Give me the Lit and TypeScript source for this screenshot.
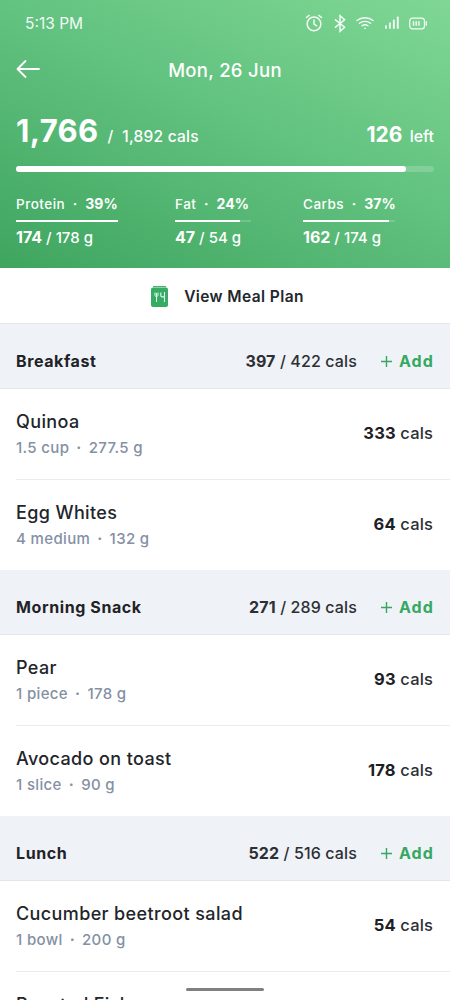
import { LitElement, html, css, svg } from "lit";
import { customElement } from "lit/decorators.js";

interface Item { name: string; qty: string; g: string; cals: number; }
interface Meal { title: string; eaten: number; goal: number; items: Item[]; }

const meals: Meal[] = [
  { title: "Breakfast", eaten: 397, goal: 422, items: [
    { name: "Quinoa", qty: "1.5 cup", g: "277.5 g", cals: 333 },
    { name: "Egg Whites", qty: "4 medium", g: "132 g", cals: 64 },
  ]},
  { title: "Morning Snack", eaten: 271, goal: 289, items: [
    { name: "Pear", qty: "1 piece", g: "178 g", cals: 93 },
    { name: "Avocado on toast", qty: "1 slice", g: "90 g", cals: 178 },
  ]},
  { title: "Lunch", eaten: 522, goal: 516, items: [
    { name: "Cucumber beetroot salad", qty: "1 bowl", g: "200 g", cals: 54 },
    { name: "Roasted Fish", qty: "1 piece", g: "150 g", cals: 210 },
  ]},
];

const macros = [
  { label: "Protein", pct: "39%", val: 174, goal: "178 g", width: 102, fill: 102 },
  { label: "Fat", pct: "24%", val: 47, goal: "54 g", width: 76, fill: 65 },
  { label: "Carbs", pct: "37%", val: 162, goal: "174 g", width: 92, fill: 86 },
];

@customElement("app-root")
export class AppRoot extends LitElement {
  static styles = css`
    :host { display: block; position: relative; width: 450px; height: 1000px; overflow: hidden; background: #fff; font-family: Inter, "Open Sans", sans-serif; color: #1c2024; }
    .hero { height: 268px; box-sizing: border-box; background: linear-gradient(205deg, #80d795 0%, #62c27f 45%, #3ea55f 100%); color: #fff; padding: 0 16px; display: flex; flex-direction: column; }
    .status { height: 46px; display: flex; align-items: center; justify-content: space-between; padding: 0 7px 0 9px; font-size: 15.5px; opacity: .92; }
    .icons { display: flex; align-items: center; gap: 10.5px; }
    .nav { height: 48px; display: flex; align-items: center; position: relative; justify-content: center; font-size: 18.5px; font-weight: 500; letter-spacing: .3px; }
    .back { position: absolute; left: 0; top: 13px; }
    .totals { display: flex; align-items: baseline; justify-content: space-between; margin-top: 18px; height: 37px; }
    .big { font-size: 31px; font-weight: 700; letter-spacing: .35px; }
    .sub { font-size: 15.5px; font-weight: 500; margin-left: 9px; letter-spacing: .25px; }
    .left { font-size: 16px; font-weight: 500; }
    .left b { font-size: 21px; font-weight: 700; margin-right: 3px; }
    .bar { height: 6px; margin-top: 17px; border-radius: 3px; background: linear-gradient(90deg, rgba(255,255,255,.3), rgba(255,255,255,.18)); }
    .bar div { width: 390px; height: 100%; border-radius: 3px; background: #fff; }
    .macros { display: grid; grid-template-columns: 159px 128px 1fr; margin-top: 23px; }
    .mlabel { font-size: 13.5px; font-weight: 500; letter-spacing: .5px; white-space: nowrap; }
    .mlabel b { font-weight: 700; font-size: 14px; letter-spacing: .1px; }
    .mlabel .dot { margin: 0 7.5px; font-weight: 700; }
    .mtrack { height: 2px; background: rgba(255,255,255,.18); margin: 8px 0 5px; }
    .mtrack div { height: 100%; background: #fff; }
    .mval { font-size: 15px; font-weight: 500; white-space: nowrap; }
    .mval b { font-size: 16px; font-weight: 700; }
    .plan { height: 56px; box-sizing: border-box; display: flex; align-items: center; justify-content: center; gap: 16px; padding: 1px 0 0 5px; font-size: 15.5px; font-weight: 600; letter-spacing: .4px; color: #23262b; border-bottom: 1px solid #e4e7ea; }
    .sec { height: 65px; box-sizing: border-box; background: #eff2f6; border-bottom: 1px solid #e4e7ea; display: flex; align-items: center; padding: 10px 17px 0 16px; font-size: 16px; }
    .sec .title { font-weight: 700; flex: 1; letter-spacing: .6px; color: #1f2227; }
    .sec .cals { font-weight: 500; color: #2c2f34; letter-spacing: .12px; }
    .sec .cals b { font-weight: 700; }
    .add { margin-left: 24px; color: #35a862; font-weight: 700; display: flex; align-items: center; gap: 7px; letter-spacing: 1.1px; margin-right: -1px; }
    .item { height: 91px; box-sizing: border-box; margin-left: 16px; padding-right: 17px; border-bottom: 1px solid #e9ebee; display: flex; align-items: center; justify-content: space-between; }
    .item:last-child { border-bottom: none; height: 90px; }
    .name { font-size: 18px; font-weight: 500; letter-spacing: .38px; color: #22252a; }
    .meta { font-size: 15px; margin-top: 6px; color: #8490a4; font-weight: 500; letter-spacing: .35px; }
    .meta .dot { margin: 0 7px; font-weight: 700; }
    .kcal { font-size: 16.5px; font-weight: 500; color: #2c2f34; margin-top: -3px; letter-spacing: .15px; }
    .kcal b { font-weight: 700; color: #1c2024; }
    .home { position: absolute; left: 186px; bottom: 9px; width: 78px; height: 3.5px; border-radius: 2px; background: #808080; }
  `;

  private statusIcons() {
    return html`<div class="icons">
      <svg width="18" height="18" viewBox="0 0 20 20" fill="none" stroke="#fff" stroke-width="1.7" stroke-linecap="round">
        <circle cx="10" cy="11" r="7.6"/><path d="M10 6.600V11.300l3 1.800M1.600 3.900 4.600 1.600M18.400 3.900 15.400 1.600"/>
      </svg>
      <svg width="12" height="19" viewBox="0 0 13 19" fill="none" stroke="#fff" stroke-width="1.6">
        <path d="M1 5 11.500 13.500 6.500 18V1l5 4.500L1 14"/>
      </svg>
      <svg width="18" height="14" viewBox="0 0 20 15" fill="none" stroke="#fff" stroke-width="1.5" stroke-linecap="round">
        <path d="M1 4.800C6 .6 14 .6 19 4.800M3.800 7.800c3.400-2.800 9-2.800 12.400 0M6.700 10.600c1.900-1.400 4.700-1.400 6.600 0"/><circle cx="10" cy="13.400" r="1" fill="#fff" stroke="none"/>
      </svg>
      <svg width="14" height="14" viewBox="0 0 16 15" fill="#fff">
        <rect x="0" y="10" width="2.200" height="4" rx=".6" opacity=".9"/><rect x="4.500" y="7" width="2.200" height="7" rx=".6" opacity=".9"/><rect x="9" y="3.500" width="2.200" height="10.500" rx=".6"/><rect x="13.500" y="0" width="2.200" height="14" rx=".6"/>
      </svg>
      <svg width="18" height="13" viewBox="0 0 20 14" fill="none" stroke="#fff" stroke-width="1.400">
        <rect x=".8" y="1" width="16.400" height="12" rx="3.200"/><path d="M19.200 5v4" stroke-linecap="round"/>
        <path d="M5 4.500v5M8 4.500v5M11 4.500v5" stroke-width="1.600"/>
      </svg>
    </div>`;
  }

  private planIcon() {
    return svg`<svg width="17" height="21" viewBox="0 0 17 21">
      <path d="M2 .6H15" stroke="#35a862" stroke-width="1" fill="none"/>
      <rect x="0" y="1.500" width="17" height="19.500" rx="2" fill="#35ab63"/>
      <path d="M4 6.500v2.600c0 1 .7 1.500 1.500 1.500S7 10.100 7 9.100V6.500M5.500 7v9" stroke="#e4f5ea" stroke-width="1" fill="none"/>
      <path d="M9.800 6.500v3.100c0 .8.600 1.300 1.400 1.300h2.300M13.500 6v10" stroke="#e4f5ea" stroke-width="1.100" fill="none"/>
    </svg>`;
  }

  render() {
    return html`
      <div class="hero">
        <div class="status"><span>5:13 PM</span>${this.statusIcons()}</div>
        <div class="nav">
          <svg class="back" width="24" height="20" viewBox="0 0 24 20" fill="none" stroke="#fff" stroke-width="1.800" stroke-linecap="round" stroke-linejoin="round">
            <path d="M23 10H1.500M9.500 2 1.500 10l8 8"/>
          </svg>
          Mon, 26 Jun
        </div>
        <div class="totals">
          <div><span class="big">1,766</span><span class="sub">/ &nbsp;1,892 cals</span></div>
          <div class="left"><b>126</b> left</div>
        </div>
        <div class="bar"><div></div></div>
        <div class="macros">
          ${macros.map((m) => html`<div>
            <div class="mlabel">${m.label}<span class="dot">·</span><b>${m.pct}</b></div>
            <div class="mtrack" style="width:${m.width}px"><div style="width:${m.fill}px"></div></div>
            <div class="mval"><b>${m.val}</b> / ${m.goal}</div>
          </div>`)}
        </div>
      </div>
      <div class="plan">${this.planIcon()}<span>View Meal Plan</span></div>
      ${meals.map((meal) => html`
        <div class="sec">
          <span class="title">${meal.title}</span>
          <span class="cals"><b>${meal.eaten}</b> / ${meal.goal} cals</span>
          <span class="add">
            <svg width="11" height="11" viewBox="0 0 11 11" stroke="#35a862" stroke-width="1.400"><path d="M5.500 0v11M0 5.500h11"/></svg>
            Add
          </span>
        </div>
        <div class="list">
          ${meal.items.map((it) => html`<div class="item">
            <div>
              <div class="name">${it.name}</div>
              <div class="meta">${it.qty}<span class="dot">·</span>${it.g}</div>
            </div>
            <div class="kcal"><b>${it.cals}</b> cals</div>
          </div>`)}
        </div>
      `)}
      <div class="home"></div>
    `;
  }
}
